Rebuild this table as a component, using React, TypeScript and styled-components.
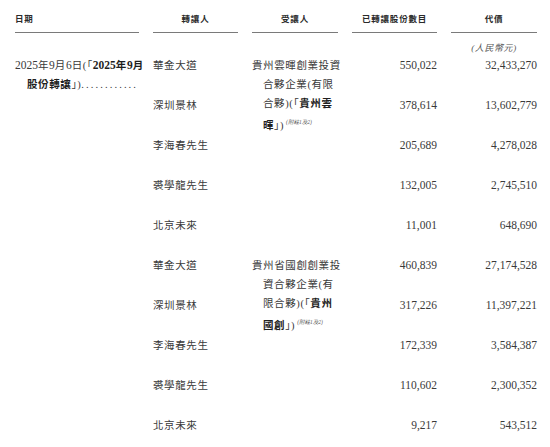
import styled, { createGlobalStyle } from 'styled-components';

const GlobalStyle = createGlobalStyle`
  html, body {
    margin: 0;
    padding: 0;
    background: #ffffff;
  }
  body {
    font-family: "Liberation Serif", "Noto Sans CJK TC", serif;
    color: #3a3a3a;
  }
`;

const Table = styled.div`
  display: grid;
  grid-template-columns: 124px 85px 86px 85px 86px;
  grid-auto-rows: auto;
  column-gap: 14px;
  padding-left: 15px;
  width: 550px;
  box-sizing: border-box;
`;

const HeadCell = styled.div<{ $align?: 'left' | 'center' }>`
  padding: 13px 0 6.5px;
  line-height: 12px;
  font-size: 8.5px;
  font-weight: 700;
  color: #2a2a2a;
  letter-spacing: 0.8px;
  text-align: ${({ $align }) => $align ?? 'center'};
  border-bottom: 1.5px solid #7a7a7a;
  white-space: nowrap;
`;

const UnitCell = styled.div`
  grid-column: 5;
  padding-top: 9px;
  height: 14px;
  line-height: 12px;
  font-size: 9px;
  font-style: italic;
  text-align: center;
  color: #555;
  letter-spacing: 0.6px;
`;

const Cell = styled.div<{ $row: number; $col: number; $span?: number; $num?: boolean }>`
  grid-row: ${({ $row, $span }) => `${$row} / span ${$span ?? 1}`};
  grid-column: ${({ $col }) => $col};
  height: ${({ $span }) => ($span ?? 1) * 40}px;
  line-height: 19px;
  font-size: ${({ $num }) => ($num ? '11.5px' : '10.5px')};
  letter-spacing: ${({ $num }) => ($num ? '0' : '0.6px')};
  text-align: ${({ $num }) => ($num ? 'right' : 'left')};
  white-space: nowrap;
`;

const Line = styled.div<{ $indent?: number }>`
  padding-left: ${({ $indent }) => $indent ?? 0}px;
`;

const Bold = styled.b`
  font-weight: 700;
  color: #1f1f1f;
`;

const DateNum = styled.span`
  font-size: 11.5px;
  letter-spacing: 0;
`;

const Leader = styled.span`
  letter-spacing: 2.1px;
`;

const Note = styled.sup`
  font-size: 5.5px;
  font-style: italic;
  letter-spacing: 0;
  vertical-align: 5px;
  margin-left: 2px;
  color: #555;
`;

type Row = { seller: string; shares: string; price: string };

const rows: Row[] = [
  { seller: '華金大道', shares: '550,022', price: '32,433,270' },
  { seller: '深圳景林', shares: '378,614', price: '13,602,779' },
  { seller: '李海春先生', shares: '205,689', price: '4,278,028' },
  { seller: '裘學龍先生', shares: '132,005', price: '2,745,510' },
  { seller: '北京未來', shares: '11,001', price: '648,690' },
  { seller: '華金大道', shares: '460,839', price: '27,174,528' },
  { seller: '深圳景林', shares: '317,226', price: '11,397,221' },
  { seller: '李海春先生', shares: '172,339', price: '3,584,387' },
  { seller: '裘學龍先生', shares: '110,602', price: '2,300,352' },
  { seller: '北京未來', shares: '9,217', price: '543,512' },
];

const FIRST = 3;

export default function App() {
  return (
    <>
      <GlobalStyle />
      <Table>
        <HeadCell $align="left">日期</HeadCell>
        <HeadCell>轉讓人</HeadCell>
        <HeadCell>受讓人</HeadCell>
        <HeadCell>已轉讓股份數目</HeadCell>
        <HeadCell>代價</HeadCell>

        <UnitCell>(人民幣元)</UnitCell>

        <Cell $row={FIRST} $col={1} $span={2}>
          <Line>
            <DateNum>2025</DateNum>年<DateNum>9</DateNum>月<DateNum>6</DateNum>日(「
            <Bold>
              <DateNum>2025</DateNum>年<DateNum>9</DateNum>月
            </Bold>
          </Line>
          <Line $indent={12}>
            <Bold>股份轉讓</Bold>」)<Leader>............</Leader>
          </Line>
        </Cell>

        <Cell $row={FIRST} $col={3} $span={2}>
          <Line>貴州雲暉創業投資</Line>
          <Line $indent={11}>合夥企業(有限</Line>
          <Line $indent={11}>
            合夥)(「<Bold>貴州雲</Bold>
          </Line>
          <Line $indent={11}>
            <Bold>暉</Bold>」)<Note>(附註1及2)</Note>
          </Line>
        </Cell>

        <Cell $row={FIRST + 5} $col={3} $span={2}>
          <Line>貴州省國創創業投</Line>
          <Line $indent={11}>資合夥企業(有</Line>
          <Line $indent={11}>
            限合夥)(「<Bold>貴州</Bold>
          </Line>
          <Line $indent={11}>
            <Bold>國創</Bold>」)<Note>(附註1及2)</Note>
          </Line>
        </Cell>

        {rows.map((r, i) => (
          <Cell key={`s${i}`} $row={FIRST + i} $col={2}>
            {r.seller}
          </Cell>
        ))}
        {rows.map((r, i) => (
          <Cell key={`n${i}`} $row={FIRST + i} $col={4} $num>
            {r.shares}
          </Cell>
        ))}
        {rows.map((r, i) => (
          <Cell key={`p${i}`} $row={FIRST + i} $col={5} $num>
            {r.price}
          </Cell>
        ))}
      </Table>
    </>
  );
}
